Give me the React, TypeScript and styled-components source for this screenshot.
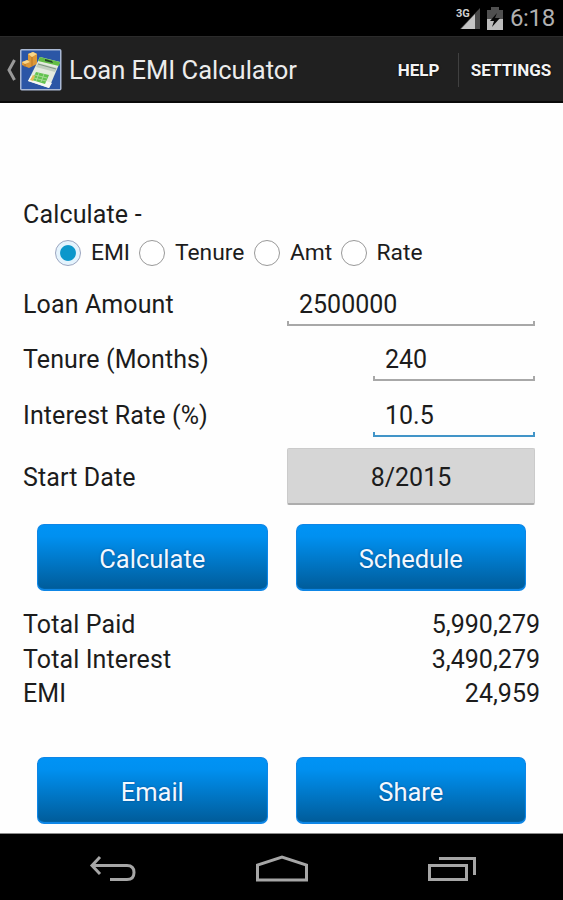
import React, { useState } from "react";
import styled, { createGlobalStyle } from "styled-components";

const GlobalStyle = createGlobalStyle`
  * { box-sizing: border-box; }
  body { margin: 0; background: #000; font-family: Roboto, "Liberation Sans", sans-serif; }
`;

const Screen = styled.div`
  width: 563px;
  height: 900px;
  display: flex;
  flex-direction: column;
  background: #000;
  overflow: hidden;
`;

const StatusBar = styled.div`
  height: 36px;
  flex: none;
  display: flex;
  align-items: center;
  justify-content: flex-end;
  gap: 6px;
  padding-right: 8px;
  color: #b0b0b0;
`;

const Clock = styled.span`
  font-size: 24px;
  line-height: 36px;
  margin-left: 1px;
  letter-spacing: -0.3px;
`;

const ActionBar = styled.header`
  height: 67px;
  flex: none;
  display: flex;
  align-items: center;
  background: #202020;
  border-top: 1px solid #2b2b2b;
  border-bottom: 2px solid #0a0a0a;
  padding: 2px 0 0 6px;
`;

const UpButton = styled.div`
  display: flex;
  align-items: center;
  gap: 3px;
`;

const Title = styled.h1`
  margin: 0 auto 0 7px;
  font-size: 25.5px;
  font-weight: 400;
  line-height: 40px;
  color: #ececec;
  white-space: nowrap;
`;

const Action = styled.button<{ $width: number }>`
  width: ${(p) => p.$width}px;
  height: 60px;
  padding: 0;
  border: 0;
  background: none;
  font: 700 17px/60px Roboto, "Liberation Sans", sans-serif;
  color: #f4f4f4;
  text-shadow: 0 0 2px #000;
`;

const Divider = styled.div`
  width: 1px;
  height: 34px;
  background: #404040;
`;

const Content = styled.main`
  flex: none;
  height: 731px;
  background: #fefefe;
  border-bottom: 1px solid #8c8c8c;
  padding-top: 94px;
  color: #1c1c1c;
  font-size: 25px;
`;

const Heading = styled.div`
  height: 36px;
  line-height: 36px;
  padding-left: 23px;
  letter-spacing: 0.15px;
`;

const RadioGroup = styled.div`
  display: flex;
  align-items: center;
  height: 40px;
  padding-left: 55px;
`;

const RadioOption = styled.label<{ $width: number }>`
  display: flex;
  align-items: center;
  gap: 10px;
  width: ${(p) => p.$width}px;
  font-size: 22.8px;
  line-height: 40px;
  white-space: nowrap;
`;

const RadioMark = styled.span<{ $on: boolean }>`
  flex: none;
  width: 26px;
  height: 26px;
  border-radius: 50%;
  border: 1.5px solid ${(p) => (p.$on ? "#9aa5c0" : "#999")};
  background: ${(p) =>
    p.$on
      ? "radial-gradient(circle, #0c97cb 7.4px, #e3f3fd 8.4px, #e9f5fd 100%)"
      : "#fff"};
`;

const Form = styled.div`
  padding-top: 3.5px;
`;

const Row = styled.div<{ $height: number }>`
  display: flex;
  justify-content: space-between;
  align-items: center;
  height: ${(p) => p.$height}px;
  padding: 0 28px 0 23px;
`;

const Label = styled.span`
  letter-spacing: 0.11px;
`;

const Field = styled.div<{ $width: number; $active?: boolean }>`
  width: ${(p) => p.$width}px;
  padding-top: 5px;
  color: ${(p) => (p.$active ? "#4295c8" : "#a8a8a8")};
`;

const FieldValue = styled.div`
  height: 33px;
  line-height: 33px;
  padding-left: 12px;
  color: #1c1c1c;
`;

const FieldBracket = styled.div`
  height: 5px;
  border: solid currentColor;
  border-width: 0 2px 2px;
`;

const DateButton = styled.button`
  width: 248px;
  height: 57px;
  margin-bottom: 2px;
  padding: 3px 0 0;
  border: 1px solid #cbcbcb;
  border-bottom: 2px solid #adadad;
  border-radius: 2px;
  background: #d6d6d6;
  color: #1c1c1c;
  font: 400 25px/51px Roboto, "Liberation Sans", sans-serif;
`;

const ButtonRow = styled.div<{ $top: number }>`
  display: flex;
  gap: 28px;
  padding: ${(p) => p.$top}px 37px 0;
`;

const BlueButton = styled.button`
  width: 230.5px;
  height: 67px;
  padding: 4px 0 0;
  border: 1px solid #0e86e6;
  border-bottom-width: 2px;
  border-radius: 7px;
  background: linear-gradient(#0093f5 0%, #0090f0 18%, #005c9a 100%);
  box-shadow: inset 0 0 1px #0a8cf0;
  color: #f2f8ff;
  font: 400 25.5px/60px Roboto, "Liberation Sans", sans-serif;
  text-shadow: 0 0 2px rgba(0, 30, 90, 0.5);
`;

const Results = styled.div`
  padding: 16px 23px 0;
`;

const ResultRow = styled.div`
  display: flex;
  justify-content: space-between;
  height: 34.5px;
  line-height: 35px;
`;

const NavBar = styled.nav`
  flex: 1;
  display: flex;
  align-items: center;
  justify-content: space-between;
  padding: 3px 86px 0 89px;
`;

const SignalIcon = () => (
  <svg width="27" height="26" viewBox="0 0 27 26">
    <path d="M6 24 L26 3 V24Z" fill="#4a4a4a" />
    <path d="M7 24 L21 9 V24Z" fill="#c4c4c4" />
    <text x="2" y="12" fontSize="11" fontWeight="700" fill="#d0d0d0" stroke="#000" strokeWidth="2" paintOrder="stroke">3G</text>
  </svg>
);

const BatteryIcon = () => (
  <svg width="16" height="24" viewBox="0 0 16 24">
    <path d="M4 1h8v3h4v20H0V4h4z" fill="#505050" />
    <path d="M0 13h16v11H0z" fill="#bcbcbc" />
    <path d="M10 7L3 15h4l-2 6 8-9H8z" fill="#080808" />
  </svg>
);

const UpCaret = () => (
  <svg width="11" height="22" viewBox="0 0 11 22">
    <path d="M8.500 1L3 11L8.500 21" fill="none" stroke="#999" strokeWidth="3" />
  </svg>
);

const AppLogo = () => (
  <svg width="42" height="42" viewBox="0 0 42 42">
    <rect x=".75" y=".75" width="40" height="40" rx="1" fill="#2b56a6" stroke="#a9b8d4" strokeWidth="1.5" />
    <path d="M2 13l6-2V5l5-2 4 2v10l-8 4-7-3z" fill="#dc9838" />
    <path d="M8 5l5-2 4 2-5 3zM2 13l5-2 3 2-5 2z" fill="#f8d78a" />
    <path d="M12 8v9M5 15v3" stroke="#b97522" />
    <path d="M20 8L40 13L29 39L8 32Z" fill="#e4ebdf" />
    <path d="M8 32L29 39L32 34L11 27Z" fill="#f7f8f2" />
    <path d="M20 8L40 13L39 17L18 12Z" fill="#62bd45" />
    <path d="M25 10l7 2 1 2-8-2z" fill="#23472a" />
    <path d="M18 14l19 5-2 4-19-5z" fill="#c2cfc0" />
    <path d="M18 15l18 5" stroke="#7e9682" />
    <path d="M16 23L29 26L25 35L12 31Z" fill="#62c24f" />
    <path d="M15 26l12 3M14 29l12 3M19 24l-3 8M24 25l-3 8" stroke="#b5e0a2" strokeWidth=".8" />
    <path d="M13 26l2 1-2 5-3-1z" fill="#e6bc55" />
  </svg>
);

const BackIcon = () => (
  <svg width="48" height="28" viewBox="0 0 48 28">
    <path d="M11 2L3 10.500L11 19M3 10.500H38Q45 10.500 45 17.500Q45 24.500 38 24.500H21" fill="none" stroke="#a6a6a6" strokeWidth="3" />
  </svg>
);

const HomeIcon = () => (
  <svg width="54" height="28" viewBox="0 0 54 28">
    <path d="M1.500 25V10L26 2L50.500 10V25Z" fill="none" stroke="#a6a6a6" strokeWidth="3" />
  </svg>
);

const RecentsIcon = () => (
  <svg width="49" height="26" viewBox="0 0 49 26">
    <path d="M1.500 9.500H38.500V23.500H1.500ZM11 2.500H46.500V19" fill="none" stroke="#a6a6a6" strokeWidth="3" />
  </svg>
);

const MODES = [
  { name: "EMI", width: 84 },
  { name: "Tenure", width: 115 },
  { name: "Amt", width: 86.5 },
  { name: "Rate", width: 90 },
];

const FIELDS = [
  { label: "Loan Amount", value: "2500000", width: 248, active: false },
  { label: "Tenure (Months)", value: "240", width: 162, active: false },
  { label: "Interest Rate (%)", value: "10.5", width: 162, active: true },
];

const RESULTS = [
  ["Total Paid", "5,990,279"],
  ["Total Interest", "3,490,279"],
  ["EMI", "24,959"],
];

export default function App() {
  const [mode, setMode] = useState("EMI");
  return (
    <Screen>
      <GlobalStyle />
      <StatusBar>
        <SignalIcon />
        <BatteryIcon />
        <Clock>6:18</Clock>
      </StatusBar>
      <ActionBar>
        <UpButton>
          <UpCaret />
          <AppLogo />
        </UpButton>
        <Title>Loan EMI Calculator</Title>
        <Action $width={79}>HELP</Action>
        <Divider />
        <Action $width={104}>SETTINGS</Action>
      </ActionBar>
      <Content>
        <Heading>Calculate -</Heading>
        <RadioGroup>
          {MODES.map((m) => (
            <RadioOption key={m.name} $width={m.width} onClick={() => setMode(m.name)}>
              <RadioMark $on={mode === m.name} />
              {m.name}
            </RadioOption>
          ))}
        </RadioGroup>
        <Form>
          {FIELDS.map((f) => (
            <Row key={f.label} $height={55.5}>
              <Label>{f.label}</Label>
              <Field $width={f.width} $active={f.active}>
                <FieldValue>{f.value}</FieldValue>
                <FieldBracket />
              </Field>
            </Row>
          ))}
          <Row $height={68}>
            <Label>Start Date</Label>
            <DateButton>8/2015</DateButton>
          </Row>
        </Form>
        <ButtonRow $top={13}>
          <BlueButton>Calculate</BlueButton>
          <BlueButton>Schedule</BlueButton>
        </ButtonRow>
        <Results>
          {RESULTS.map(([label, value]) => (
            <ResultRow key={label}>
              <Label>{label}</Label>
              <span>{value}</span>
            </ResultRow>
          ))}
        </Results>
        <ButtonRow $top={46}>
          <BlueButton>Email</BlueButton>
          <BlueButton>Share</BlueButton>
        </ButtonRow>
      </Content>
      <NavBar>
        <BackIcon />
        <HomeIcon />
        <RecentsIcon />
      </NavBar>
    </Screen>
  );
}
